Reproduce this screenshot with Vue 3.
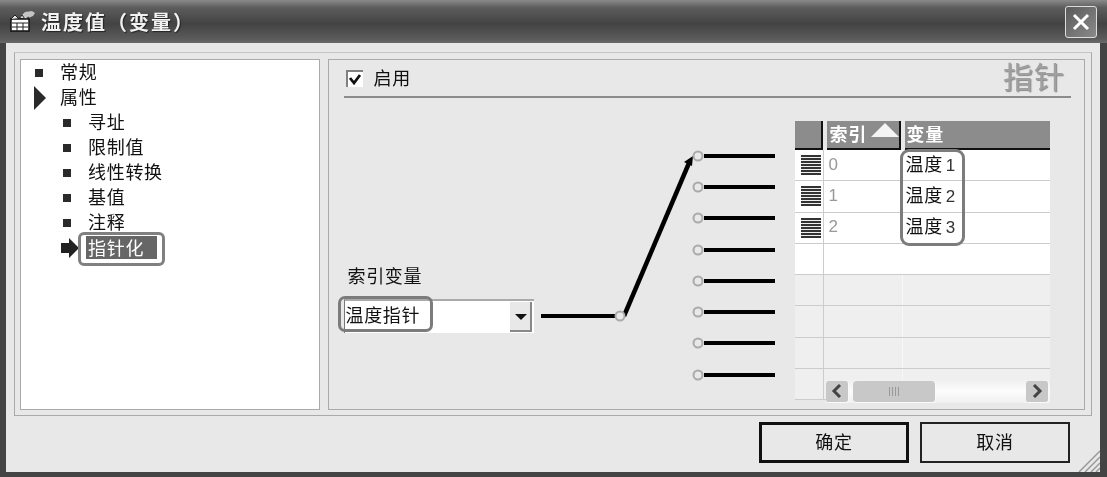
<template>
  <div class="window">
    <div class="titlebar">
      <svg class="title-icon" width="26" height="22" viewBox="0 0 26 22">
        <path d="M10 6 L15 1 L22 0 L25 2 L23 5 L16 8 Z" fill="#c4c4c4" />
        <rect x="1" y="8" width="18" height="12" fill="#fff" stroke="#111" stroke-width="1.5" />
        <path d="M1 8 L5 4 L9 8 L12 4 L15 8 L19 6" fill="#e8e8e8" stroke="#222" />
        <path d="M2 12 H18 M2 16 H18 M7 12 V20 M13 12 V20" stroke="#222" fill="none" />
      </svg>
      <span class="title-text">温度值（变量）</span>
      <button class="close" type="button">
        <svg width="20" height="20" viewBox="0 0 20 20">
          <path d="M3 3 L17 17 M17 3 L3 17" stroke="#fff" stroke-width="3" />
        </svg>
      </button>
    </div>

    <div class="content">
      <div class="frame">
        <ul class="tree">
          <li v-for="item in treeItems" :key="item.label" class="tree-row" :class="{ sub: item.sub }">
            <span class="marker">
              <svg v-if="item.kind === 'open'" width="14" height="24" viewBox="0 0 14 24">
                <path d="M1 0 L13 12 L1 24 Z" fill="#2a2a2a" />
              </svg>
              <svg v-else-if="item.kind === 'current'" width="19" height="20" viewBox="0 0 19 20">
                <path d="M0 5 H8 V0 L18 10 L8 20 V15 H0 Z" fill="#222" />
              </svg>
              <span v-else class="bullet"></span>
            </span>
            <span class="tree-label" :class="{ selected: item.kind === 'current' }">{{ item.label }}</span>
          </li>
        </ul>

        <div class="panel">
          <div class="panel-head">
            <label class="enable">
              <span class="checkbox">
                <svg width="15" height="15" viewBox="0 0 15 15">
                  <path d="M2 6 L6 11 L12 3" fill="none" stroke="#111" stroke-width="2.8" />
                </svg>
              </span>
              <span class="enable-text">启用</span>
            </label>
            <span class="panel-title">指针</span>
          </div>

          <div class="panel-body">
            <div class="index-col">
              <div class="index-label">索引变量</div>
              <div class="combo">
                <span class="combo-text">温度指针</span>
                <span class="combo-btn"></span>
                <span class="ring combo-ring"></span>
              </div>
            </div>

            <svg class="switch" width="261" height="279" viewBox="0 0 261 279">
              <path d="M7 195 H82" stroke="#000" stroke-width="4" />
              <path d="M90 195 L155 42" stroke="#000" stroke-width="4.5" />
              <path d="M159 35 L150 41 L158 45 Z" fill="#000" />
              <g v-for="y in outputs" :key="y">
                <path :d="`M170 ${y} H241`" stroke="#000" stroke-width="4" />
                <circle cx="164" :cy="y" r="4.5" fill="#e8e8e8" stroke="#aaa" stroke-width="2" />
              </g>
              <circle cx="86" cy="195" r="4.5" fill="#e8e8e8" stroke="#aaa" stroke-width="2" />
            </svg>

            <div class="grid">
              <div class="grid-head">
                <div class="head-cell head-corner"></div>
                <div class="head-cell head-index">
                  <span class="head-text">索引</span>
                  <svg width="28" height="14" viewBox="0 0 28 14"><path d="M14 0 L28 14 H0 Z" fill="#f4f4f4" /></svg>
                </div>
                <div class="head-cell head-var"><span class="head-text">变量</span></div>
              </div>
              <div v-for="row in rows" :key="row.key" class="grid-row" :class="{ empty: row.empty }">
                <div class="row-handle"><span v-if="row.name" class="handle-lines"></span></div>
                <div class="cell-index">{{ row.index }}</div>
                <div class="cell-var">
                  {{ row.name }}<span v-if="row.name" class="num">{{ row.num }}</span>
                </div>
              </div>
              <span class="ring var-ring"></span>
              <div class="scrollbar">
                <span class="sb-btn">
                  <svg width="12" height="14" viewBox="0 0 12 14"><path d="M9 1 L3 7 L9 13" fill="none" stroke="#444" stroke-width="3" /></svg>
                </span>
                <span class="sb-thumb"><i></i><i></i><i></i><i></i></span>
                <span class="sb-btn sb-right">
                  <svg width="12" height="14" viewBox="0 0 12 14"><path d="M3 1 L9 7 L3 13" fill="none" stroke="#444" stroke-width="3" /></svg>
                </span>
              </div>
            </div>
          </div>
        </div>
      </div>

      <div class="actions">
        <button class="btn default" type="button"><span class="btn-text">确定</span></button>
        <button class="btn" type="button"><span class="btn-text">取消</span></button>
      </div>
      <svg class="grip" width="22" height="22" viewBox="0 0 22 22">
        <path d="M1 22 L22 1 M7 22 L22 7 M13 22 L22 13 M18 22 L22 18" stroke="#999" stroke-width="1.5" />
      </svg>
    </div>
  </div>
</template>

<script setup>
const treeItems = [
  { label: '常规' },
  { label: '属性', kind: 'open' },
  { label: '寻址', sub: true },
  { label: '限制值', sub: true },
  { label: '线性转换', sub: true },
  { label: '基值', sub: true },
  { label: '注释', sub: true },
  { label: '指针化', sub: true, kind: 'current' }
]

const outputs = [35, 66, 97, 129, 160, 191, 222, 254]

const rows = [
  { key: 0, index: '0', name: '温度', num: '1' },
  { key: 1, index: '1', name: '温度', num: '2' },
  { key: 2, index: '2', name: '温度', num: '3' },
  { key: 3 },
  { key: 4, empty: true },
  { key: 5, empty: true },
  { key: 6, empty: true },
  { key: 7, empty: true }
]
</script>

<style>
html,
body {
  margin: 0;
  background: #e8e8e8;
}
</style>

<style scoped>
.window {
  width: 1107px;
  height: 477px;
  display: flex;
  flex-direction: column;
  box-sizing: border-box;
  font-family: "Noto Sans CJK SC", "Liberation Sans", sans-serif;
  font-size: 18px;
  letter-spacing: 0.7px;
  color: #111;
  background: #e8e8e8;
  overflow: hidden;
  filter: blur(0.35px);
}

.titlebar {
  height: 43px;
  flex: none;
  display: flex;
  align-items: center;
  padding: 0 10px;
  box-sizing: border-box;
  background: linear-gradient(#8a8a8a 0, #5c5c5c 18%, #434343 55%, #5a5a5a 90%, #6a6a6a 100%);
}

.title-icon {
  flex: none;
}

.title-text {
  margin-left: 5px;
  font-size: 20px;
  font-weight: 700;
  letter-spacing: 2px;
  color: #f2f2f2;
  text-shadow: 1px 1px 1px #222;
}

.close {
  margin-left: auto;
  width: 32px;
  height: 32px;
  padding: 0;
  display: flex;
  align-items: center;
  justify-content: center;
  border: 1px solid #ddd;
  border-radius: 3px;
  background: linear-gradient(135deg, #5a5a5a, #8a8a8a);
}

.content {
  position: relative;
  flex: 1;
  display: flex;
  flex-direction: column;
  border-left: 6px solid #444;
  border-right: 7px solid #444;
  border-bottom: 5px solid #444;
  padding: 9px 8px 0 8px;
  min-height: 0;
}

.frame {
  width: 1078px;
  height: 364px;
  box-sizing: border-box;
  display: flex;
  gap: 8px;
  padding: 6px 6px 6px 5px;
  border: 1px solid #aaa;
  border-top-color: #c4c4c4;
}

.tree {
  width: 301px;
  height: 351px;
  box-sizing: border-box;
  margin: 0;
  padding: 0;
  list-style: none;
  background: #fff;
  border: 1px solid #aaa;
}

.tree-row {
  height: 25px;
  display: flex;
  align-items: center;
  padding-left: 12px;
  line-height: 1;
}

.tree-row.sub {
  padding-left: 40px;
}

.marker {
  width: 27px;
  height: 25px;
  flex: none;
  display: flex;
  align-items: center;
}

.bullet {
  width: 8px;
  height: 8px;
  margin-left: 2px;
  background: #2a2a2a;
}

.tree-label {
  padding-bottom: 3px;
}

.tree-label.selected {
  position: relative;
  margin-left: -2px;
  padding: 2px 13px 3px 2px;
  background: #666;
  color: #fff;
}

.tree-label.selected::after {
  content: "";
  position: absolute;
  inset: -4px -8px -7px -8px;
  border: 3px solid #808080;
  border-radius: 6px;
}

.panel {
  width: 758px;
  height: 351px;
  box-sizing: border-box;
  display: flex;
  flex-direction: column;
  border: 1px solid #aaa;
}

.panel-head {
  height: 38px;
  flex: none;
  box-sizing: border-box;
  margin: 0 13px 0 15px;
  display: flex;
  align-items: center;
  justify-content: space-between;
  border-bottom: 2px solid #8c8c8c;
}

.enable {
  display: flex;
  align-items: center;
  gap: 10px;
  margin-left: 2px;
}

.enable-text {
  padding-bottom: 2px;
}

.checkbox {
  width: 15px;
  height: 15px;
  display: flex;
  background: #fff;
  border-top: 2px solid #808080;
  border-left: 2px solid #808080;
}

.panel-title {
  margin-right: 6px;
  padding-bottom: 6px;
  font-size: 30px;
  line-height: 32px;
  font-weight: 400;
  letter-spacing: 1px;
  color: #a0a0a0;
  text-shadow: 1px 1px 1px #8a8a8a;
}

.panel-body {
  flex: 1;
  min-height: 0;
  position: relative;
  display: flex;
  align-items: flex-start;
  padding: 23px 0 0 15px;
}

.index-col {
  width: 190px;
  height: 212px;
  flex: none;
  display: flex;
  flex-direction: column;
  justify-content: flex-end;
}

.index-label {
  margin: 0 0 12px 3px;
  line-height: 24px;
}

.combo {
  position: relative;
  height: 34px;
  box-sizing: border-box;
  display: flex;
  align-items: center;
  background: #fff;
  border-top: 2px solid #aaa;
  border-left: 1px solid #777;
}

.combo-text {
  padding-bottom: 6px;
}

.combo-btn {
  position: absolute;
  right: 2px;
  top: 1px;
  bottom: 1px;
  width: 22px;
  box-sizing: border-box;
  background: #e8e8e8;
  border-right: 2px solid #888;
  border-bottom: 2px solid #888;
}

.combo-btn::after {
  content: "";
  position: absolute;
  left: 5px;
  top: 12px;
  border-left: 6px solid transparent;
  border-right: 6px solid transparent;
  border-top: 6px solid #111;
}

.ring {
  position: absolute;
  box-sizing: border-box;
  border: 3px solid #7c7c7c;
  pointer-events: none;
}

.combo-ring {
  left: -7px;
  top: -5px;
  width: 95px;
  height: 36px;
  border-radius: 7px;
}

.switch {
  flex: none;
}

.grid {
  position: relative;
  width: 255px;
  flex: none;
}

.grid-head {
  height: 29px;
  display: flex;
  color: #fff;
  font-weight: 700;
}

.head-cell {
  height: 29px;
  box-sizing: border-box;
  display: flex;
  align-items: center;
  background: #8c8c8c;
  border-bottom: 2px solid #111;
  line-height: 1;
}

.head-text {
  padding-bottom: 4px;
}

.head-corner {
  width: 28px;
  margin-right: 4px;
  border-right: 2px solid #111;
}

.head-index {
  width: 74px;
  margin-right: 4px;
  padding-left: 2px;
  gap: 4px;
  border-right: 2px solid #111;
}

.head-index svg {
  align-self: flex-start;
  margin-top: 2px;
}

.head-var {
  flex: 1;
  padding-left: 1px;
}

.grid-row {
  height: 31.3px;
  box-sizing: border-box;
  display: flex;
  align-items: center;
  background: #fff;
  border-bottom: 1px solid #ccc;
}

.grid-row.empty {
  background: #efefef;
}

.row-handle {
  width: 29px;
  height: 100%;
  flex: none;
  box-sizing: border-box;
  display: flex;
  align-items: center;
  justify-content: flex-end;
  padding-right: 2px;
  border-right: 1px solid #ccc;
}

.handle-lines {
  width: 20px;
  height: 20px;
  background: repeating-linear-gradient(#333 0, #333 2px, #f0f0f0 2px, #f0f0f0 3px);
}

.cell-index {
  width: 79px;
  padding: 0 0 1px 4px;
  box-sizing: border-box;
  flex: none;
  color: #999;
  font-family: "Liberation Sans", sans-serif;
  font-size: 17px;
}

.grid-row.empty .cell-index {
  height: 100%;
  border-right: 1px solid #f8f8f8;
}

.cell-var {
  padding: 0 0 3px 2px;
  white-space: nowrap;
  line-height: 1;
}

.num {
  margin-left: 3px;
  font-family: "Liberation Sans", sans-serif;
  font-size: 17px;
  color: #333;
}

.var-ring {
  left: 105px;
  top: 28px;
  width: 65px;
  height: 97px;
  border-radius: 9px;
}

.scrollbar {
  position: absolute;
  left: 31px;
  right: 0;
  top: 259px;
  height: 23px;
  display: flex;
  align-items: center;
  gap: 4px;
  background: linear-gradient(#f0f0f0, #fcfcfc 50%, #f0f0f0);
}

.sb-btn {
  width: 23px;
  height: 22px;
  display: flex;
  align-items: center;
  justify-content: center;
  box-sizing: border-box;
  background: #c8c8c8;
  border-right: 1px solid #fafafa;
  border-bottom: 1px solid #fafafa;
  border-radius: 3px;
}

.sb-thumb {
  width: 83px;
  height: 22px;
  box-sizing: border-box;
  display: flex;
  align-items: center;
  justify-content: center;
  gap: 2px;
  background: #c8c8c8;
  border-right: 1px solid #fafafa;
  border-bottom: 1px solid #fafafa;
  border-radius: 4px;
}

.sb-thumb i {
  width: 1px;
  height: 9px;
  background: #999;
}

.sb-right {
  margin-left: auto;
  margin-right: 1px;
}

.actions {
  display: flex;
  justify-content: flex-end;
  gap: 11px;
  margin-top: 6px;
  margin-right: 22px;
}

.btn {
  width: 150px;
  height: 41px;
  padding: 0;
  box-sizing: border-box;
  background: #e8e8e8;
  border: 2px solid #222;
  font: inherit;
  letter-spacing: inherit;
  color: #111;
}

.btn-text {
  display: block;
  padding-bottom: 4px;
}

.btn.default {
  border-width: 3px;
  border-color: #111;
}

.grip {
  position: absolute;
  right: 0;
  bottom: 0;
}
</style>
